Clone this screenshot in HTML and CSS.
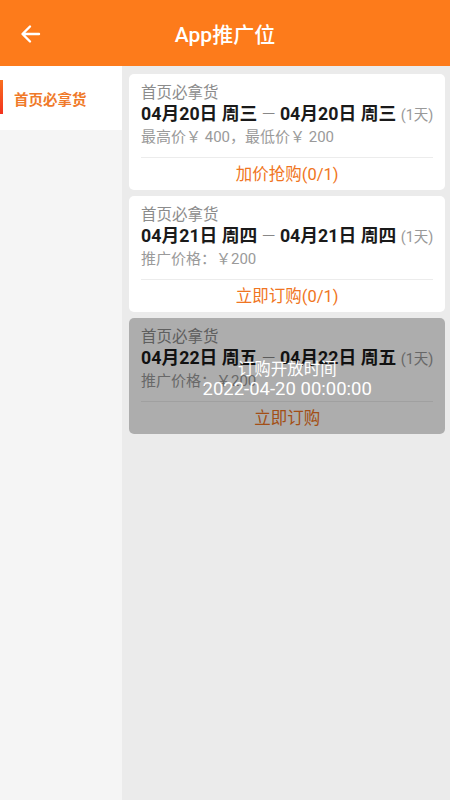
FILE: index.html
```html
<!DOCTYPE html>
<html lang="zh">
<head>
<meta charset="utf-8">
<link rel="stylesheet" href="styles.css">
</head>
<body>
<div class="app">
  <header class="topbar">
    <svg class="back" width="24" height="24" viewBox="0 0 24 24"><path d="M20 12H4.5M11 4.5L3.5 12L11 19.5" fill="none" stroke="#fff" stroke-width="2.4" stroke-linecap="round" stroke-linejoin="round"/></svg>
    <div class="title">App推广位</div>
  </header>
  <div class="body">
    <aside class="side">
      <div class="side-item active"><span class="bar"></span>首页必拿货</div>
    </aside>
    <main class="list">
      <div class="card">
        <div class="name">首页必拿货</div>
        <div class="date">04月20日 周三 <span class="dash">—</span> 04月20日 周三 <span class="days">(1天)</span></div>
        <div class="price">最高价￥ 400，最低价￥ 200</div>
        <div class="action">加价抢购(0/1)</div>
      </div>
      <div class="card">
        <div class="name">首页必拿货</div>
        <div class="date">04月21日 周四 <span class="dash">—</span> 04月21日 周四 <span class="days">(1天)</span></div>
        <div class="price">推广价格：￥200</div>
        <div class="action">立即订购(0/1)</div>
      </div>
      <div class="card locked">
        <div class="name">首页必拿货</div>
        <div class="date">04月22日 周五 <span class="dash">—</span> 04月22日 周五 <span class="days">(1天)</span></div>
        <div class="price">推广价格：￥200</div>
        <div class="action">立即订购</div>
        <div class="mask">
          <div class="mask-t1">订购开放时间</div>
          <div class="mask-t2">2022-04-20 00:00:00</div>
        </div>
      </div>
    </main>
  </div>
</div>
</body>
</html>
```

FILE: styles.css
```css
* { box-sizing: border-box; }
html, body { margin: 0; padding: 0; }
body {
  font-family: Roboto, "Noto Sans CJK SC", sans-serif;
  width: 450px;
  height: 800px;
  overflow: hidden;
  background: #ebebeb;
}
.app { display: flex; flex-direction: column; height: 800px; }
.topbar {
  height: 66px;
  background: #fd7b1b;
  display: flex;
  align-items: center;
  justify-content: center;
  position: relative;
  flex-shrink: 0;
}
.back { position: absolute; left: 19px; top: 22px; }
.title {
  color: #fff;
  font-size: 21px;
  font-weight: 500;
}
.body { display: flex; flex: 1; }
.side {
  width: 122px;
  background: #f5f5f5;
  flex-shrink: 0;
}
.side-item {
  height: 64px;
  display: flex;
  align-items: center;
  padding-left: 14px;
  font-size: 14.5px;
  font-weight: 700;
  color: #f07a2a;
  position: relative;
}
.side-item.active { background: #fff; }
.bar {
  position: absolute;
  left: 0;
  top: 14px;
  width: 3px;
  height: 34px;
  background: linear-gradient(#f8701f, #f3321e);
}
.list {
  flex: 1;
  padding: 8px 5px 0 7px;
  display: flex;
  flex-direction: column;
  gap: 6px;
}
.card {
  background: #fff;
  border-radius: 5px;
  padding: 10px 12px 0 12px;
  position: relative;
  overflow: hidden;
  height: 116px;
  flex-shrink: 0;
}
.name {
  font-size: 15.5px;
  line-height: 19px;
  height: 19px;
  color: #8c8c8c;
}
.date {
  margin-top: 1px;
  font-size: 17.8px;
  line-height: 20px;
  height: 20px;
  font-weight: 700;
  color: #1a1a1a;
  white-space: nowrap;
}
.dash { font-weight: 300; color: #888; }
.days { font-size: 14.5px; font-weight: 400; color: #999; }
.price {
  margin-top: 3px;
  font-size: 15px;
  line-height: 20px;
  height: 31px;
  color: #9a9a9a;
  border-bottom: 1px solid #ececec;
}
.action {
  height: 32px;
  line-height: 33px;
  text-align: center;
  font-size: 16.5px;
  color: #f07522;
}
.mask {
  position: absolute;
  inset: 0;
  background: rgba(0, 0, 0, 0.32);
  display: flex;
  flex-direction: column;
  align-items: center;
  justify-content: center;
  color: #fff;
  padding-top: 7px;
}
.mask-t1 { font-size: 16.5px; line-height: 19px; }
.mask-t2 { font-size: 18.5px; line-height: 20px; }
```
